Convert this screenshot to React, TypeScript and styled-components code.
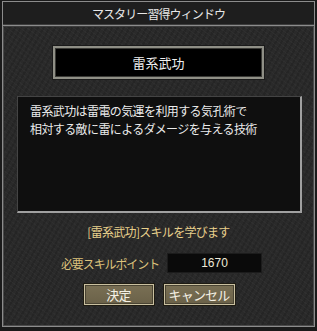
import React from 'react'
import styled, { createGlobalStyle } from 'styled-components'

const GlobalStyle = createGlobalStyle`
  html, body {
    margin: 0;
    padding: 0;
    background: #151515;
  }
  body {
    font-family: "Noto Sans CJK JP", "DejaVu Sans", sans-serif;
    -webkit-font-smoothing: none;
  }
`

const Stone = `
  background-color: #2a2a2a;
  background-image:
    repeating-linear-gradient(37deg, rgba(255,255,255,0.025) 0 1px, transparent 1px 4px),
    repeating-linear-gradient(-61deg, rgba(0,0,0,0.12) 0 2px, transparent 2px 5px);
`

const Window = styled.div`
  width: 317px;
  height: 331px;
  box-sizing: border-box;
  padding: 1px 2px 4px 2px;
  background: #1a1a1a;
  display: flex;
`

const Frame = styled.div`
  flex: 1;
  display: flex;
  flex-direction: column;
  border: 1px solid #8c8c8c;
  box-shadow: inset 1px 1px 0 #4a4a4a, inset -1px -1px 0 #4a4a4a;
  ${Stone}
`

const TitleBar = styled.div`
  height: 23px;
  display: flex;
  align-items: center;
  justify-content: center;
  background: #1e1e1e;
  border-bottom: 1px solid #8c8c8c;
  box-shadow: 0 1px 0 #3c3c3c, inset 0 -1px 0 #3c3c3c;
  color: #e8e8e8;
  font-size: 12px;
  letter-spacing: -0.9px;
`

const Body = styled.div`
  flex: 1;
  display: flex;
  flex-direction: column;
  align-items: center;
  padding-top: 20px;
`

const NameBox = styled.div`
  width: 211px;
  height: 33px;
  box-sizing: border-box;
  background: #000;
  border: 2px solid #8f8f86;
  box-shadow: inset 1px 1px 0 #3a3a36, inset -1px -1px 0 #3a3a36, 0 0 0 1px #1a1a1a;
  display: flex;
  align-items: center;
  justify-content: center;
  color: #f0f0f0;
  font-size: 13px;
`

const DescBox = styled.div`
  margin-top: 17px;
  margin-left: 2px;
  width: 285px;
  height: 117px;
  box-sizing: border-box;
  background: #0f0f0f;
  border-top: 1px solid #444;
  border-left: 1px solid #444;
  border-right: 2px solid #a0a0a0;
  border-bottom: 2px solid #a0a0a0;
  padding: 5px 0 0 12px;
  color: #ececec;
  font-size: 12px;
  line-height: 18px;
  letter-spacing: -0.6px;
`

const Notice = styled.div`
  margin-top: 10px;
  color: #e8d08c;
  font-size: 12px;
  letter-spacing: -0.7px;
`

const PointRow = styled.div`
  margin-top: 13px;
  margin-left: 6px;
  display: flex;
  align-items: center;
  gap: 8px;
`

const PointLabel = styled.span`
  color: #dcc27c;
  font-size: 12px;
  letter-spacing: -1.1px;
`

const PointValue = styled.div`
  width: 95px;
  height: 20px;
  box-sizing: border-box;
  background: #0a0a0a;
  border: 1px solid #1c1c1c;
  display: flex;
  align-items: center;
  justify-content: center;
  color: #f0ead8;
  font-family: "Liberation Sans", Arial, sans-serif;
  font-size: 12px;
`

const ButtonRow = styled.div`
  margin-top: 10px;
  margin-left: 1px;
  display: flex;
  gap: 8px;
`

const Button = styled.button<{ $w: number }>`
  width: ${p => p.$w}px;
  height: 23px;
  box-sizing: border-box;
  padding: 0;
  background: linear-gradient(#7a7055, #6a6148);
  border: 1px solid #1e1b12;
  box-shadow: inset 1px 1px 0 #c9c0a0, inset -1px -1px 0 #c9c0a0, inset 2px 2px 0 #4a4433, inset -2px -2px 0 #4a4433;
  color: #f4f0e4;
  font-family: "Noto Sans CJK JP", sans-serif;
  font-size: 13px;
  letter-spacing: -0.8px;
  display: flex;
  align-items: center;
  justify-content: center;
`

const App = () => {
  return (
    <Window>
      <GlobalStyle />
      <Frame>
        <TitleBar>マスタリー習得ウィンドウ</TitleBar>
        <Body>
          <NameBox>雷系武功</NameBox>
          <DescBox>
            雷系武功は雷電の気運を利用する気孔術で
            <br />
            相対する敵に雷によるダメージを与える技術
          </DescBox>
          <Notice>[雷系武功]スキルを学びます</Notice>
          <PointRow>
            <PointLabel>必要スキルポイント</PointLabel>
            <PointValue>1670</PointValue>
          </PointRow>
          <ButtonRow>
            <Button $w={72}>決定</Button>
            <Button $w={73}>キャンセル</Button>
          </ButtonRow>
        </Body>
      </Frame>
    </Window>
  )
}

export default App
